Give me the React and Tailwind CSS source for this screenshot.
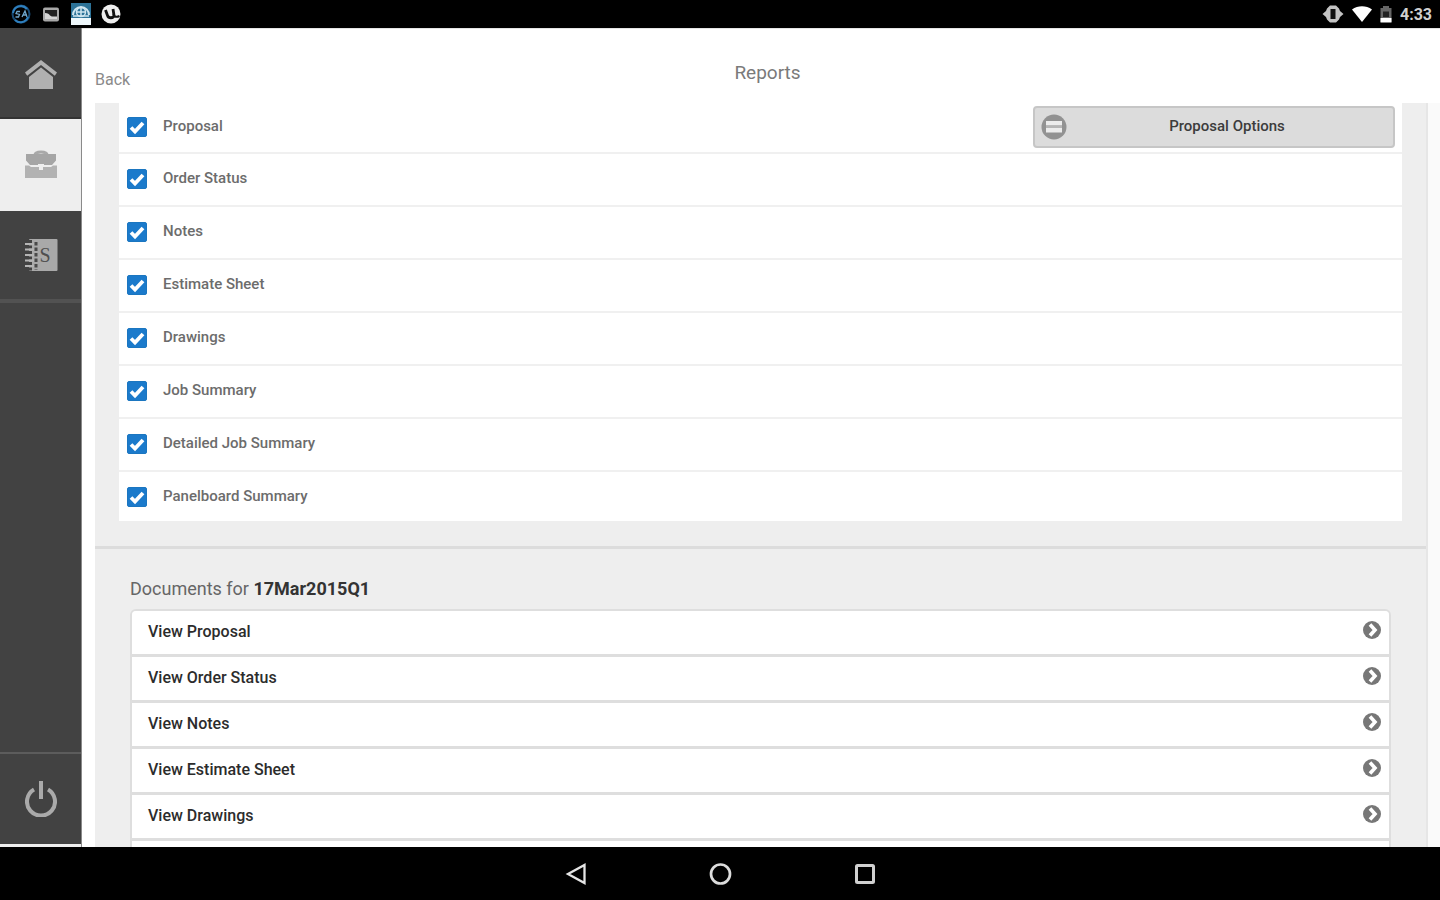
import { useState } from "react";

const REPORTS = [
  "Proposal",
  "Order Status",
  "Notes",
  "Estimate Sheet",
  "Drawings",
  "Job Summary",
  "Detailed Job Summary",
  "Panelboard Summary",
];

const DOCUMENTS = ["View Proposal", "View Order Status", "View Notes", "View Estimate Sheet", "View Drawings"];

function StatusBar() {
  return (
    <header className="flex h-7 shrink-0 items-center justify-between bg-black pl-[11px] pr-2 text-white">
      <div className="flex items-center gap-2.5">
        <svg className="h-5 w-5" viewBox="0 0 20 20" fill="none">
          <circle cx="10" cy="10" r="8.5" stroke="#174a74" strokeWidth="2" />
          <path d="M2 9a8 8 0 0 1 14-4M4 16a8 8 0 0 0 13-3" stroke="#2f7fbd" strokeWidth="2" />
          <path d="M9 7.500H6l-1 2 3.500 1-1 2.500H4.500M11 13l3-6 2 6M12 11h4" stroke="#6fa6cc" strokeWidth="1.300" />
        </svg>
        <svg className="h-5 w-5" viewBox="0 0 20 20">
          <rect x="2" y="3.500" width="16" height="14" rx="2" fill="#a8a8a8" />
          <rect x="4" y="6" width="12" height="8" fill="#222" />
          <path d="M4 9c3 0 4 1 5 2.500 2 1.500 4 1 7 1V15H4z" fill="#d5d5d5" />
        </svg>
        <svg className="h-[22px] w-5" viewBox="0 0 20 22">
          <rect width="20" height="22" fill="#2c7297" />
          <path d="M2 12a8 8 0 0 1 16 0" fill="none" stroke="#cfe5ef" strokeWidth="2" />
          <circle cx="10" cy="9" r="4.500" fill="none" stroke="#cfe5ef" strokeWidth="1.500" />
          <path d="M10 4v10M5 9h10M2 13h16" stroke="#cfe5ef" strokeWidth="1.500" />
          <path d="M0 15h20v7H0z" fill="#eef7fb" />
        </svg>
        <svg className="h-5 w-5" viewBox="0 0 20 20">
          <circle cx="10" cy="10" r="9.500" fill="#efefef" />
          <path d="M4.500 6l2 5.500c1 3 6 3 6.500 0L12 5" fill="none" stroke="#111" strokeWidth="2.800" />
          <path d="M12.500 10c.5 3 3 3.500 6 2" fill="none" stroke="#111" strokeWidth="2" />
        </svg>
      </div>
      <div className="flex items-center gap-2">
        <svg className="h-5 w-[22px]" viewBox="0 0 22 20">
          <path d="M8 1.500h6l3 3 1 2.500 3.500 3-3.500 3-1 2.500-3 3H8l-3-3L4 13 .5 10 4 7l1-2.500z" fill="#c4c4c4" />
          <path d="M8.500 5h5v10h-5z" fill="#111" />
        </svg>
        <svg className="h-[18px] w-5" viewBox="0 0 20 18">
          <path d="M0 4.500C6 .2 14 .2 20 4.500L10 17z" fill="#fff" />
        </svg>
        <svg className="h-[18px] w-3" viewBox="0 0 12 18">
          <path d="M3 1h6v2h2.500v14H.5V3H3z" fill="#666" />
          <path d="M3 12V6.500h6V12" fill="#222" />
          <path d="M.5 13h11v4.500H.5z" fill="#fff" />
        </svg>
        <span className="pt-0.5 text-base font-bold leading-5 text-[#d0d0d0]">4:33</span>
      </div>
    </header>
  );
}

function Sidebar() {
  return (
    <nav className="flex w-[82px] shrink-0 flex-col border-r border-[#8a8a8a] bg-[#424242]">
      <button type="button" aria-label="Home" className="flex h-[91px] items-center justify-center border-b-2 border-[#333] pt-1">
        <svg className="h-8 w-8" viewBox="0 0 32 32">
          <path d="M16 1L0 13.500l2.200 3.200L16 6l13.800 10.700 2.200-3.200z" fill="#b0b0b0" />
          <path d="M16 8.500L4 18v12h24V18z" fill="#b0b0b0" />
        </svg>
      </button>
      <button type="button" aria-label="Jobs" aria-current="page" className="flex h-[92px] items-center justify-center bg-[#eee]">
        <svg className="h-8 w-8" viewBox="0 0 32 32">
          <path d="M10 6c0-4 12-4 12 0" fill="none" stroke="#a9a9a9" strokeWidth="3" />
          <path d="M1 5h30v6.500l-4 4.500h-8v-1h-6v1H5l-4-4.500z" fill="#a5a5a5" />
          <path d="M0 16.500h4l2 1.500h8v3h4v-3h8l2-1.500h4V29H0z" fill="#b2b2b2" />
        </svg>
      </button>
      <button type="button" aria-label="Price book" className="flex h-[92px] items-center justify-center border-b-4 border-[#525252]">
        <svg className="h-[34px] w-[34px]" viewBox="0 0 34 34">
          <rect x="5" y="1" width="28.500" height="32" rx="1" fill="#a9a9a9" />
          <path d="M12 4v28" stroke="#4a4a4a" strokeWidth="3" strokeDasharray="3.500 2" />
          <path d="M4 3.500h4M4 9h4M4 14.500h4M4 20h4M4 25.500h4M4 31h4" stroke="#424242" strokeWidth="3" />
          <path d="M1 6h9M1 11.500h9M1 17h9M1 22.500h9M1 28h9" stroke="#b5b5b5" strokeWidth="2.200" />
          <text x="21" y="24" fill="#4f4f4f" fontSize="20" textAnchor="middle" fontFamily="Liberation Serif, serif">S</text>
        </svg>
      </button>
      <button type="button" aria-label="Log out" className="mt-auto flex h-[95px] items-center justify-center border-b-[3px] border-t-2 border-b-[#eee] border-t-[#5c5c5c]">
        <svg className="h-9 w-8" viewBox="0 0 32 36" fill="none" stroke="#aaa" strokeWidth="4">
          <path d="M9 8.500a14 14 0 1 0 14 0" />
          <path d="M16 0v18" />
        </svg>
      </button>
    </nav>
  );
}

function ReportRow({ label, checked, onToggle, options }) {
  return (
    <li className="flex h-[53px] items-center justify-between border-b-2 border-[#f0f0f0] bg-white pb-0.5 pl-2 pr-[7px] first:h-[51px] last:h-[49px] last:border-b-0 last:pb-0">
      <label className="flex items-center gap-4 text-[15px] leading-5 text-[#6c6c6c]">
        <span className="grid place-items-center">
          <input
            type="checkbox"
            checked={checked}
            onChange={onToggle}
            className="col-start-1 row-start-1 h-5 w-5 appearance-none rounded-xs border border-[#1b76c0] bg-white checked:bg-[#1b7acb]"
          />
          <svg className="pointer-events-none col-start-1 row-start-1 h-5 w-5" viewBox="0 0 20 20" fill="none">
            <path d="M4 10.500l4 4L16 6" stroke="#fff" strokeWidth="3.800" />
          </svg>
        </span>
        <span className="pb-0.5 font-medium">{label}</span>
      </label>
      {options && (
        <button type="button" className="flex h-[42px] w-[362px] items-center rounded border-2 border-[#c6c6c6] bg-[#dcdcdc] px-1.5 text-[15px] font-medium leading-5 text-[#3c3c3c]">
          <svg className="h-[26px] w-[26px]" viewBox="0 0 26 26">
            <circle cx="13" cy="13" r="12.500" fill="#929292" />
            <path d="M5 7h16v4.500H5zM5 14h16v4.500H5z" fill="#ececec" />
            <path d="M5 11.500h16V14H5z" fill="#b5b5b5" />
          </svg>
          <span className="flex-1 pb-0.5 text-center">{options}</span>
        </button>
      )}
    </li>
  );
}

function DocumentRow({ label }) {
  return (
    <li className="border-b-[3px] border-[#dedede] bg-white">
      <a href="#document" className="flex h-[43px] items-center justify-between pb-0.5 pl-4 pr-[7px] text-base font-medium leading-5 text-[#2c2c2c]">
        <span>{label}</span>
        <svg className="mb-1 h-5 w-5" viewBox="0 0 20 20" fill="none">
          <circle cx="10" cy="10" r="9" fill="#777" />
          <path d="M9 3.500h3.500L18 10l-5.500 6.500H9l4.500-6.500z" fill="#777" />
          <path d="M8 4.500l5 5.500-5 5.500" stroke="#fff" strokeWidth="3.600" />
        </svg>
      </a>
    </li>
  );
}

function SystemNav() {
  return (
    <footer className="flex h-[53px] shrink-0 items-center justify-center gap-[120px] bg-black">
      <button type="button" aria-label="Back">
        <svg className="h-6 w-6" viewBox="0 0 24 24" fill="none" stroke="#e4e4e4" strokeWidth="2.300">
          <path d="M20.500 3v18L4 12z" />
        </svg>
      </button>
      <button type="button" aria-label="Home screen">
        <svg className="h-6 w-6" viewBox="0 0 24 24" fill="none" stroke="#dcdcdc" strokeWidth="2.700">
          <circle cx="12.500" cy="12" r="9.500" />
        </svg>
      </button>
      <button type="button" aria-label="Recent apps">
        <svg className="h-6 w-6" viewBox="0 0 24 24" fill="none" stroke="#d0d0d0" strokeWidth="3">
          <rect x="4.500" y="3.500" width="17" height="17" rx="1" />
        </svg>
      </button>
    </footer>
  );
}

export default function App() {
  const [selected, setSelected] = useState(REPORTS);

  function toggle(name) {
    setSelected((prev) => (prev.includes(name) ? prev.filter((n) => n !== name) : [...prev, name]));
  }

  return (
    <div className="flex h-screen flex-col overflow-hidden bg-white font-[Roboto,sans-serif]">
      <StatusBar />
      <div className="flex min-h-0 flex-1">
        <Sidebar />
        <main className="flex min-w-0 flex-1 flex-col">
          <div className="grid h-[75px] shrink-0 grid-cols-[1fr_auto_1fr] items-center border-t border-[#e4e4e4] pl-[13px]">
            <a href="#back" className="pt-7 text-base leading-5 text-[#8a8a8a]">Back</a>
            <h1 className="pt-3.5 text-[19px] leading-6 text-[#7a7a7a]">Reports</h1>
          </div>
          <div className="flex min-h-0 flex-1 overflow-hidden">
            <div className="min-w-0 flex-1 pl-[13px]">
              <div className="border-r-2 border-[#e6e6e6] bg-[#eee]">
                <section className="border-b-[3px] border-[#dcdcdc] px-6 pb-[25px]">
                  <ul>
                    {REPORTS.map((name) => (
                      <ReportRow
                        key={name}
                        label={name}
                        checked={selected.includes(name)}
                        onToggle={() => toggle(name)}
                        options={name === "Proposal" ? "Proposal Options" : null}
                      />
                    ))}
                  </ul>
                </section>
                <section className="px-[35px] pt-7">
                  <h2 className="text-lg leading-6 text-[#666]">
                    Documents for <b className="font-bold text-[#333]">17Mar2015Q1</b>
                  </h2>
                  <ul className="mt-2 overflow-hidden rounded-md border-2 border-[#dedede]">
                    {DOCUMENTS.map((name) => (
                      <DocumentRow key={name} label={name} />
                    ))}
                    <li className="h-11 bg-white" />
                  </ul>
                </section>
              </div>
            </div>
            <div className="w-3 shrink-0 bg-[#fafafa]" />
          </div>
        </main>
      </div>
      <SystemNav />
    </div>
  );
}
